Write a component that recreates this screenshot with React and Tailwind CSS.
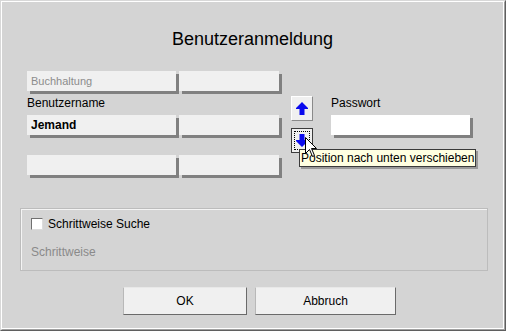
import React from 'react';

function Field({ children, wide, white, muted, bold }) {
  return (
    <div
      className={`h-[20px] flex items-center pl-[4px] shadow-[3px_3px_0_#808080] ${wide ? 'w-[149px]' : 'w-[100px]'} ${white ? 'bg-white' : 'bg-[#f0f0f0]'} ${muted ? 'text-[11px] text-[#8c8c8c]' : 'text-[12px] text-black'} ${bold ? 'font-bold' : ''}`}
    >
      {children}
    </div>
  );
}

function Arrow({ down }) {
  return (
    <svg width="12" height="13" viewBox="0 0 12 13" className={down ? 'rotate-180' : ''}>
      <path d="M6 0 L12 6 L12 7 L8.5 7 L8.5 13 L3.5 13 L3.5 7 L0 7 L0 6 Z" fill="#0a0aee" />
    </svg>
  );
}

export default function App() {
  return (
    <div className="relative w-[506px] h-[331px] font-['Liberation_Sans',Arial,sans-serif] text-black">
      <div className="w-full h-full border border-t-[#d8d8d8] border-l-[#d8d8d8] border-r-[#5f5f5f] border-b-[#5f5f5f]">
        <div className="w-full h-full border border-t-white border-l-white border-r-[#a0a0a0] border-b-[#a0a0a0]">
          <div className="w-full h-full bg-[#d4d4d4] border-r border-b border-r-white border-b-white flex flex-col">
            {/* Title */}
            <div className="pt-[26px] text-center text-[18px] leading-[22px]">Benutzeranmeldung</div>

            {/* Fields */}
            <div className="flex mt-[21px] ml-[25px]">
              <div className="flex flex-col">
                <div className="flex gap-[3px]">
                  <Field wide muted>Buchhaltung</Field>
                  <Field />
                </div>
                <div className="h-[24px] flex items-center text-[12px]">Benutzername</div>
                <div className="flex gap-[3px]">
                  <Field wide bold>Jemand</Field>
                  <Field />
                </div>
                <div className="flex gap-[3px] mt-[20px]">
                  <Field wide />
                  <Field />
                </div>
              </div>

              <div className="flex flex-col ml-[12px] pt-[25px] gap-[7px]">
                <div className="w-[22px] h-[25px] bg-[#f0f0f0] border border-t-white border-l-white border-r-[#8a8a8a] border-b-[#8a8a8a] flex items-center justify-center">
                  <Arrow />
                </div>
                <div className="w-[22px] h-[25px] bg-[#f0f0f0] border border-[#3c3c3c] p-[2px]">
                  <div className="w-full h-full border border-dotted border-black flex items-center justify-center">
                    <Arrow down />
                  </div>
                </div>
              </div>

              <div className="flex flex-col ml-[18px] pt-[20px]">
                <div className="h-[24px] flex items-center text-[12px]">Passwort</div>
                <div className="w-[139px] h-[20px] bg-white shadow-[3px_3px_0_#808080]" />
              </div>
            </div>

            {/* Group */}
            <div className="mt-[33px] ml-[18px] w-[468px] h-[63px] border border-[#bcbcbc] shadow-[inset_1px_1px_0_#f4f4f4] flex flex-col pl-[10px] pt-[9px]">
              <div className="flex items-center h-[12px]">
                <div className="w-[12px] h-[12px] bg-white border border-t-[#707070] border-l-[#707070] border-r-[#dcdcdc] border-b-[#dcdcdc]" />
                <span className="ml-[5px] text-[12px] leading-[14px]">Schrittweise Suche</span>
              </div>
              <div className="mt-[15px] text-[12px] leading-[14px] text-[#8a8a8a]">Schrittweise</div>
            </div>

            {/* Buttons */}
            <div className="flex mt-[16px] ml-[121px] gap-[8px]">
              <button className="w-[124px] h-[28px] bg-[#f0f0f0] border border-t-[#e8e8e8] border-l-[#b8b8b8] border-r-[#6a6a6a] border-b-[#6a6a6a] text-[12px]">OK</button>
              <button className="w-[141px] h-[28px] bg-[#f0f0f0] border border-t-[#e8e8e8] border-l-[#b8b8b8] border-r-[#6a6a6a] border-b-[#6a6a6a] text-[12px]">Abbruch</button>
            </div>
          </div>
        </div>
      </div>

      {/* Tooltip */}
      <div className="absolute left-[299px] top-[149px] w-[177px] h-[18px] bg-[#ffffe1] border border-[#3a3a3a] shadow-[2px_2px_0_#9a9a9a] text-[12px] leading-[16px] pl-[1px] whitespace-nowrap">
        Position nach unten verschieben
      </div>

      {/* Cursor */}
      <svg className="absolute left-[305px] top-[137px]" width="13" height="21" viewBox="0 0 13 21">
        <path d="M0.5 0.5 L0.5 16.5 L4.5 12.5 L7.5 19.5 L9.5 18.5 L6.5 11.5 L11.5 11.5 Z" fill="white" stroke="black" strokeWidth="1" />
      </svg>
    </div>
  );
}
